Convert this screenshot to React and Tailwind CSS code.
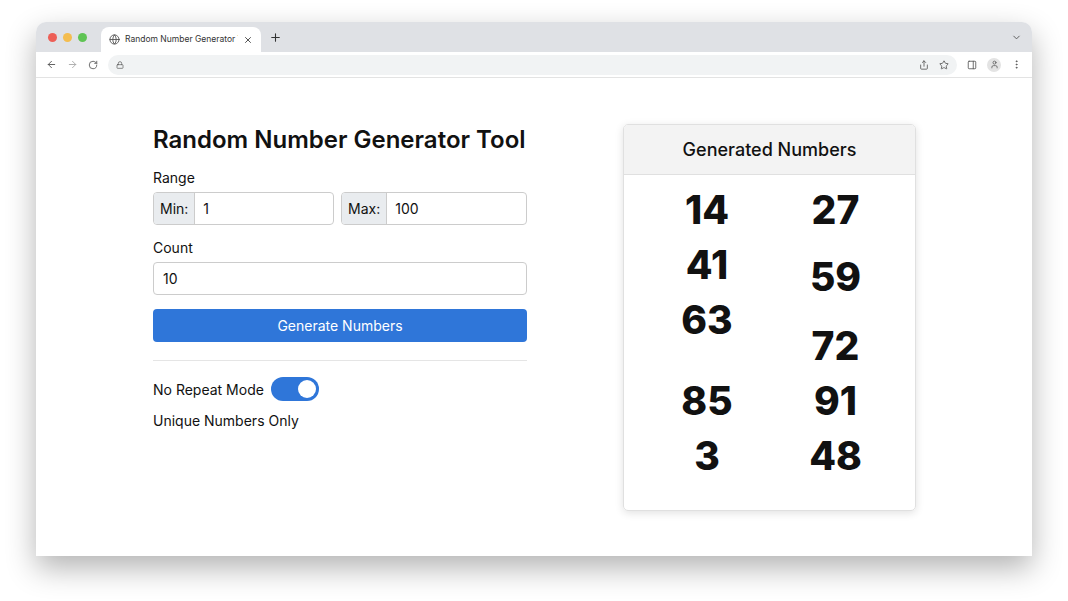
import React from 'react'
import { ArrowLeft, ArrowRight, RotateCw, Lock, Share, Star, PanelRight, User, MoreVertical, ChevronDown, Globe, X, Plus } from 'lucide-react'

const left = [['14', ''], ['41', ''], ['63', ''], ['85', 'mt-[26px]'], ['3', '']]
const right = [['27', ''], ['59', 'mt-[12px]'], ['72', 'mt-[14px]'], ['91', ''], ['48', '']]

const App = () => {
    return (
        <div className='w-[1068px] h-[601px] bg-white pt-[22px] pl-[36px]' style={{ fontFamily: 'Inter, "Noto Sans", sans-serif' }}>
            <div className='w-[996px] h-[534px] bg-white rounded-t-[10px] overflow-hidden shadow-[0_12px_30px_rgba(0,0,0,0.3)] flex flex-col'>
                {/* TAB BAR */}
                <div className='h-[30px] bg-[#dfe1e5] flex items-end pl-[12px] pr-[10px]'>
                    <div className='flex gap-[6px] self-center mr-[14px]'>
                        <div className='w-[9px] h-[9px] rounded-full bg-[#ed5f57]' />
                        <div className='w-[9px] h-[9px] rounded-full bg-[#f4bd4f]' />
                        <div className='w-[9px] h-[9px] rounded-full bg-[#5fc454]' />
                    </div>
                    <div className='w-[160px] h-[25px] bg-white rounded-t-[8px] flex items-center px-[8px] gap-[5px]'>
                        <Globe size={11} className='text-[#555] shrink-0' />
                        <span className='text-[8.5px] text-[#333] flex-1 overflow-hidden whitespace-nowrap'>Random Number Generator Tool</span>
                        <X size={10} className='text-[#333] shrink-0' />
                    </div>
                    <Plus size={13} className='text-[#333] self-center ml-[8px]' />
                    <div className='flex-1' />
                    <ChevronDown size={11} className='text-[#555] self-center' />
                </div>
                {/* TOOLBAR */}
                <div className='h-[26px] bg-white border-b border-[#e3e3e3] flex items-center px-[10px] gap-[10px] text-[#555]'>
                    <ArrowLeft size={11} />
                    <ArrowRight size={11} className='text-[#aaa]' />
                    <RotateCw size={10} />
                    <div className='flex-1 h-[20px] bg-[#f1f3f4] rounded-full flex items-center px-[8px]'>
                        <Lock size={8} />
                        <div className='flex-1' />
                        <Share size={10} className='mr-[10px]' />
                        <Star size={10} />
                    </div>
                    <PanelRight size={10} />
                    <div className='w-[14px] h-[14px] rounded-full bg-[#e3e3e3] flex items-center justify-center'><User size={9} /></div>
                    <MoreVertical size={11} />
                </div>
                {/* CONTENT */}
                <div className='flex-1 flex pl-[117px] pt-[46px]'>
                    <div className='w-[374px] text-[#111]'>
                        <h1 className='text-[24px] font-semibold leading-[32px] whitespace-nowrap'>Random Number Generator Tool</h1>
                        <div className='text-[14px] mt-[11px]'>Range</div>
                        <div className='flex gap-[7px] mt-[4px] text-[14px]'>
                            <div className='flex w-[181px] h-[33px] border border-[#ccc] rounded-[4px] overflow-hidden'>
                                <span className='bg-[#e9ecef] px-[6px] flex items-center border-r border-[#ccc]'>Min:</span>
                                <span className='px-[8px] flex items-center'>1</span>
                            </div>
                            <div className='flex flex-1 h-[33px] border border-[#ccc] rounded-[4px] overflow-hidden'>
                                <span className='bg-[#e9ecef] px-[6px] flex items-center border-r border-[#ccc]'>Max:</span>
                                <span className='px-[8px] flex items-center'>100</span>
                            </div>
                        </div>
                        <div className='text-[14px] mt-[12px]'>Count</div>
                        <div className='h-[33px] mt-[4px] border border-[#ccc] rounded-[4px] flex items-center px-[9px] text-[14px]'>10</div>
                        <div className='h-[33px] mt-[14px] bg-[#2f76d9] rounded-[4px] flex items-center justify-center text-white text-[14px]'>Generate Numbers</div>
                        <div className='h-px bg-[#e5e5e5] mt-[18px]' />
                        <div className='flex items-center gap-[7px] mt-[16px] text-[14px]'>
                            <span>No Repeat Mode</span>
                            <div className='w-[48px] h-[24px] rounded-full bg-[#2f76d9] flex items-center justify-end px-[3px]'>
                                <div className='w-[18px] h-[18px] rounded-full bg-white' />
                            </div>
                        </div>
                        <div className='text-[14px] mt-[9px]'>Unique Numbers Only</div>
                    </div>
                    <div className='ml-[96px] w-[293px] h-[387px] border border-[#e0e0e0] rounded-[5px] shadow-[0_2px_8px_rgba(0,0,0,0.12)] overflow-hidden'>
                        <div className='h-[50px] bg-[#f3f3f3] border-b border-[#e0e0e0] flex items-center justify-center text-[18px] text-[#111] font-medium'>Generated Numbers</div>
                        <div className='flex pt-[7px] text-[39px] font-extrabold text-[#111] leading-[55px]'>
                            <div className='w-[166px] flex flex-col items-center pl-[0px]'>
                                {left.map(([n, c]) => <div key={n} className={c}>{n}</div>)}
                            </div>
                            <div className='flex-1 flex flex-col items-center pr-[34px]'>
                                {right.map(([n, c]) => <div key={n} className={c}>{n}</div>)}
                            </div>
                        </div>
                    </div>
                </div>
            </div>
        </div>
    )
}

export default App
